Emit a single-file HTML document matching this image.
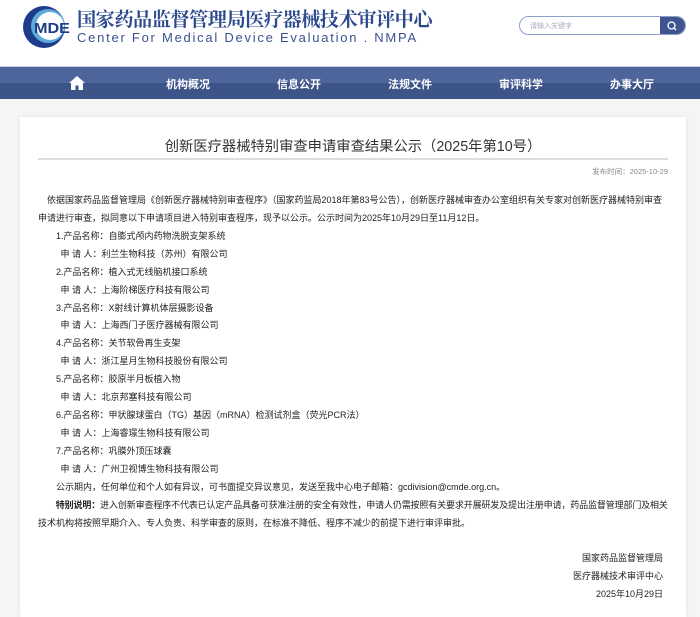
<!DOCTYPE html>
<html><head><meta charset="utf-8"><style>
*{margin:0;padding:0;box-sizing:border-box}
body{width:700px;height:607px;background:#f5f5f5;font-family:"Liberation Sans","Noto Sans CJK SC",sans-serif;position:relative;overflow:hidden}
.hdr{position:absolute;left:0;top:0;width:700px;height:66px;background:#fff}
.cn{position:absolute;left:77px;top:5px;font-family:"Noto Serif CJK SC",serif;font-size:19.2px;color:#2c4a8e;font-weight:bold;letter-spacing:-0.5px;white-space:nowrap}
.en{position:absolute;left:77px;top:30px;font-size:13px;color:#3a5290;letter-spacing:1.75px;white-space:nowrap}
.search{position:absolute;left:519px;top:16px;width:167px;height:19px;border:1px solid #8ea0c8;border-radius:10px;background:#fff;overflow:hidden}
.search span{position:absolute;left:10px;top:4px;font-size:7px;color:#aab}
.search b{position:absolute;right:0;top:0;width:25px;height:19px;background:#3e5591}
.nav{position:absolute;left:0;top:66px;width:700px;height:33px;background:linear-gradient(#4d659b 0,#4d659b 50%,#3c5488 50%,#3c5488 100%);border-top:1px solid #c9d1e1}
.nav div{position:absolute;top:9px;color:#fff;font-size:11px;font-weight:bold;white-space:nowrap}
.box{position:absolute;left:20px;top:117px;width:666px;height:500px;background:#fff;box-shadow:0 0 4px rgba(0,0,0,.08)}
.title{position:absolute;left:0;width:666px;top:18px;text-align:center;font-size:14.3px;color:#333}
.line{position:absolute;left:18px;top:41px;width:630px;height:2px;background:#ddd}
.date{position:absolute;right:18px;top:49px;font-size:7.5px;color:#888}
.txt{position:absolute;left:18px;top:75px;font-size:9px;line-height:17.92px;color:#222;white-space:nowrap}
.sig{position:absolute;right:23px;top:432px;font-size:9px;line-height:18px;color:#222;text-align:right}
</style></head><body>
<div class="hdr">
<svg style="position:absolute;left:21px;top:4px" width="52" height="46" viewBox="0 0 52 46">
<circle cx="23" cy="23" r="21" fill="#1d3c8a"/>
<circle cx="27" cy="22" r="17" fill="#5fa8dc"/>
<circle cx="29" cy="22" r="14" fill="#fff"/>
<text x="13" y="29" font-family="Liberation Sans" font-weight="bold" font-size="15" fill="#1d3c8a" textLength="36" lengthAdjust="spacingAndGlyphs">MDE</text>
</svg>
<div class="cn">国家药品监督管理局医疗器械技术审评中心</div>
<div class="en">Center For Medical Device Evaluation . NMPA</div>
<div class="search"><span>请输入关键字</span><b><svg width="25" height="19"><circle cx="11.5" cy="8.5" r="3.5" fill="none" stroke="#fff" stroke-width="1.3"/><line x1="14" y1="11" x2="16" y2="13" stroke="#fff" stroke-width="1.3"/></svg></b></div>
</div>
<div class="nav">
<svg style="position:absolute;left:69px;top:9px" width="16" height="14" viewBox="0 0 16 14"><path d="M8 0L0 7h2v7h4.5V9.5h3V14H14V7h2z" fill="#fff"/></svg>
<div style="left:166px">机构概况</div><div style="left:277px">信息公开</div><div style="left:388px">法规文件</div><div style="left:499px">审评科学</div><div style="left:610px">办事大厅</div>
</div>
<div class="box">
<div class="title">创新医疗器械特别审查申请审查结果公示（2025年第10号）</div>
<div class="line"></div>
<div class="date">发布时间：2025-10-29</div>
<div class="txt">
&emsp;依据国家药品监督管理局《创新医疗器械特别审查程序》（国家药监局2018年第83号公告），创新医疗器械审查办公室组织有关专家对创新医疗器械特别审查<br>
申请进行审查，拟同意以下申请项目进入特别审查程序，现予以公示。公示时间为2025年10月29日至11月12日。<br>
&emsp;&emsp;1.产品名称：自膨式颅内药物洗脱支架系统<br>
&emsp;&emsp;&ensp;申 请 人：利兰生物科技（苏州）有限公司<br>
&emsp;&emsp;2.产品名称：植入式无线脑机接口系统<br>
&emsp;&emsp;&ensp;申 请 人：上海阶梯医疗科技有限公司<br>
&emsp;&emsp;3.产品名称：X射线计算机体层摄影设备<br>
&emsp;&emsp;&ensp;申 请 人：上海西门子医疗器械有限公司<br>
&emsp;&emsp;4.产品名称：关节软骨再生支架<br>
&emsp;&emsp;&ensp;申 请 人：浙江星月生物科技股份有限公司<br>
&emsp;&emsp;5.产品名称：胶原半月板植入物<br>
&emsp;&emsp;&ensp;申 请 人：北京邦塞科技有限公司<br>
&emsp;&emsp;6.产品名称：甲状腺球蛋白（TG）基因（mRNA）检测试剂盒（荧光PCR法）<br>
&emsp;&emsp;&ensp;申 请 人：上海睿璟生物科技有限公司<br>
&emsp;&emsp;7.产品名称：巩膜外顶压球囊<br>
&emsp;&emsp;&ensp;申 请 人：广州卫视博生物科技有限公司<br>
&emsp;&emsp;公示期内，任何单位和个人如有异议，可书面提交异议意见，发送至我中心电子邮箱：gcdivision@cmde.org.cn。<br>
<span style="letter-spacing:-0.13px">&emsp;&emsp;<b>特别说明：</b>进入创新审查程序不代表已认定产品具备可获准注册的安全有效性，申请人仍需按照有关要求开展研发及提出注册申请，药品监督管理部门及相关</span><br>
技术机构将按照早期介入、专人负责、科学审查的原则，在标准不降低、程序不减少的前提下进行审评审批。
</div>
<div class="sig">国家药品监督管理局<br>医疗器械技术审评中心<br>2025年10月29日</div>
</div>
</body></html>
